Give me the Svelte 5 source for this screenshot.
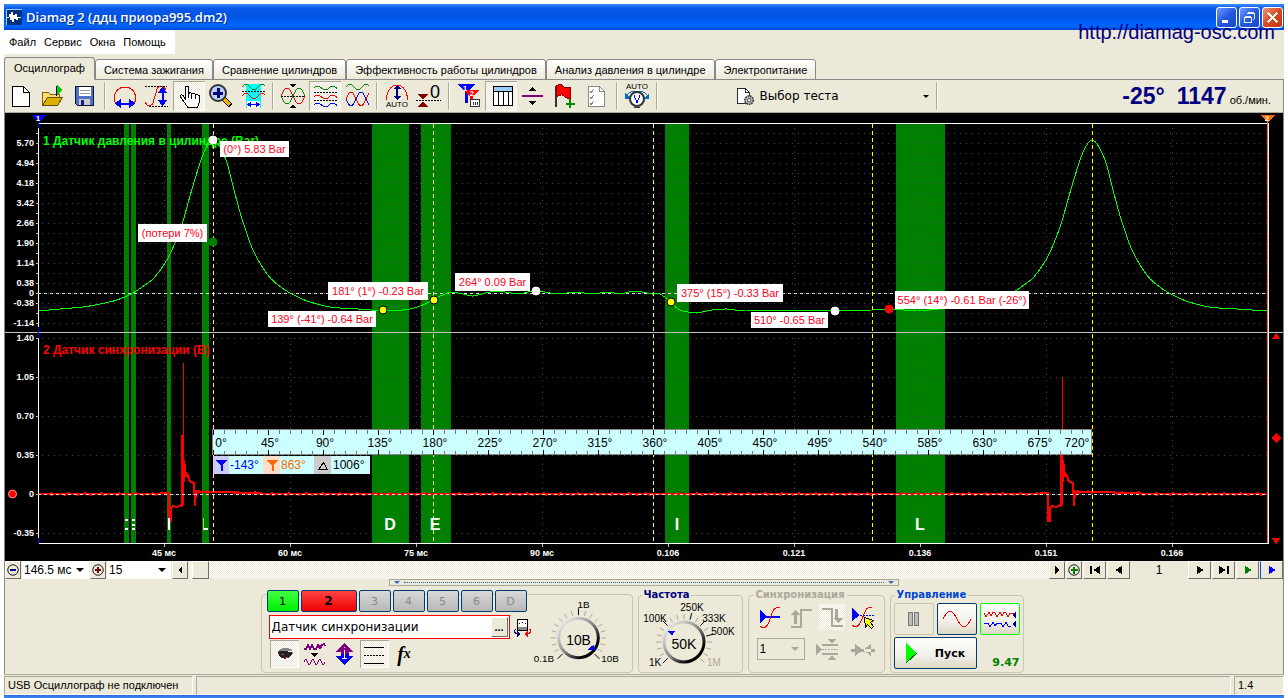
<script>
    const menu = ["Файл", "Сервис", "Окна", "Помощь"];

    const tabs = [
        "Осциллограф",
        "Система зажигания",
        "Сравнение цилиндров",
        "Эффективность работы цилиндров",
        "Анализ давления в цилиндре",
        "Электропитание",
    ];

    // each inner list is one block of the toolbar, blocks are split by a separator
    const tools = [
        ["new", "open", "save"],
        ["period", "rise", "hand", "zoom", "fit"],
        ["overlay", "stack", "mix"],
        ["auto", "zero"],
        ["markers", "table", "split", "flag", "report"],
        ["autoVolt"],
    ];
    const toolTitles = {
        new: "Новый",
        open: "Открыть",
        save: "Сохранить",
        period: "Период",
        rise: "Фронт",
        hand: "Рука",
        zoom: "Увеличить",
        fit: "По ширине",
        overlay: "Наложить",
        stack: "Разделить",
        mix: "Совместить",
        auto: "Авто",
        zero: "Ноль",
        markers: "Маркеры",
        table: "Таблица",
        split: "Разделитель",
        flag: "Добавить флаг",
        report: "Отчёт",
        autoVolt: "Авто диапазон",
    };

    let activeTab = $state(0);
    let pressed = $state(["hand", "stack", "table"]);
    let channel = $state(2);
    let sensor = $state("Датчик синхронизации");

    function toggleTool(name) {
        pressed = pressed.includes(name)
            ? pressed.filter((n) => n !== name)
            : [...pressed, name];
    }

    const channels = [1, 2, 3, 4, 5, 6, "D"];

    // plot geometry
    const left = 38;
    const right = 1267;
    const top = 124;
    const bottom = 543;
    const zero1 = 293;
    const zero2 = 494;
    const cycle = 879;

    const scale1 = [
        "5.70", "4.94", "4.18", "3.42", "2.66", "1.90", "1.14", "0.38", "-0.38", "-1.14",
    ].map((text, i) => ({ text, y: 143 + i * 20 }));
    const scale2 = ["1.40", "1.05", "0.70", "0.35", "0", "-0.35"].map(
        (text, i) => ({ text, y: 338 + i * 39 }),
    );
    const times = [
        "45 мс", "60 мс", "75 мс", "90 мс", "0.106", "0.121", "0.136", "0.151", "0.166",
    ].map((text, i) => ({ text, x: 164 + i * 126 }));
    const minorRows = Array.from({ length: 20 }, (_, i) => 133 + i * 10);

    const bands = [
        [124, 129], [131, 136], [167, 171], [202, 209],
        [372, 409], [421, 451], [665, 689], [896, 945],
    ];
    const letters = [["D", 390], ["E", 435], ["I", 677], ["L", 920]];
    const strokes = [213, 433, 653, 872, 1092];

    const notes = [
        { x: 220, y: 141, w: 69, h: 16, text: "(0°) 5.83 Bar" },
        { x: 138, y: 224, w: 69, h: 18, text: "(потери 7%)" },
        { x: 268, y: 311, w: 108, h: 16, text: "139° (-41°) -0.64 Bar" },
        { x: 328, y: 282, w: 100, h: 18, text: "181° (1°) -0.23 Bar" },
        { x: 455, y: 273, w: 75, h: 18, text: "264° 0.09 Bar" },
        { x: 677, y: 284, w: 106, h: 18, text: "375° (15°) -0.33 Bar" },
        { x: 751, y: 312, w: 77, h: 16, text: "510° -0.65 Bar" },
        { x: 895, y: 291, w: 134, h: 18, text: "554° (14°) -0.61 Bar (-26°)" },
    ];
    const dots = [
        [213, 140, "#fff"], [213, 242, "#008000"], [383, 310, "#ff0"],
        [434, 300, "#ff0"], [536, 291, "#fff"], [671, 302, "#ff0"],
        [835, 311, "#fff"], [889, 309, "#f00"],
    ];

    const rising = [
        [39, 311], [60, 309], [83, 307], [100, 304], [117, 300], [133, 293],
        [145, 285], [153, 279], [161, 269], [168, 258], [175, 243], [183, 221],
        [190, 196], [200, 163], [206, 148], [213, 140],
    ];
    const falling = [
        [220, 147], [227, 163], [233, 186], [242, 219], [253, 250], [267, 274],
        [278, 285], [290, 293], [307, 301], [330, 307], [358, 309], [388, 311],
    ];
    const middle = [
        [410, 309], [425, 304], [434, 299], [445, 294], [452, 292], [463, 294],
        [473, 296], [490, 292], [505, 292], [518, 294], [536, 291], [558, 294],
        [575, 292], [592, 294], [607, 292], [621, 294], [634, 291], [652, 294],
        [660, 294], [671, 302], [678, 309], [688, 312], [702, 312], [712, 310],
        [727, 309], [745, 311], [790, 310], [835, 311], [872, 310], [904, 310],
    ];
    const shift = (points) => points.map(([x, y]) => [x + cycle, y]);
    const pressure = smooth([
        ...rising,
        ...falling,
        ...middle,
        ...shift(rising),
        ...shift(falling),
    ]);

    const pulse = [
        [169, 493], [169, 521], [171, 521], [171, 508], [173, 506], [177, 507],
        [181, 505], [182, 507], [182, 436], [183, 436], [183, 505], [184, 460],
        [186, 476], [188, 475], [189, 480], [191, 482], [194, 483], [195, 506],
        [196, 490], [197, 493], [199, 491],
    ];
    const sync = syncTrace();

    function smooth(p) {
        let d = `M${p[0]}`;
        for (let i = 0; i < p.length - 1; i++) {
            const a = p[i - 1] ?? p[i];
            const b = p[i];
            const c = p[i + 1];
            const e = p[i + 2] ?? c;
            d += `C${b[0] + (c[0] - a[0]) / 6} ${b[1] + (c[1] - a[1]) / 6} ${c[0] - (e[0] - b[0]) / 6} ${c[1] - (e[1] - b[1]) / 6} ${c[0]} ${c[1]}`;
        }
        return d;
    }

    function syncTrace() {
        const points = [];
        let x = left + 1;
        while (x < right) {
            const phase = x - (x > 1000 ? cycle : 0);
            if (phase === 169) {
                const dx = x - 169;
                points.push(...pulse.map(([px, py]) => [px + dx, py]));
                x += 31;
                continue;
            }
            let y = zero2;
            if (phase > 160 && phase < 169) y = 493;
            if (phase > 199 && phase < 236) y = 492;
            else if (phase >= 236 && phase < 262) y = 493;
            points.push([x, y + ((x * 7919) % 13 === 0 ? 1 : 0) - ((x * 31) % 17 === 0 ? 1 : 0)]);
            x += 1;
        }
        return "M" + points.map((p) => p.join(" ")).join("L");
    }

    function wave(x, y, len, amp, period, dir = 1) {
        let d = "";
        for (let i = 0; i <= len; i++) {
            const v = y - dir * amp * Math.sin((i / period) * 2 * Math.PI);
            d += `${i ? "L" : "M"}${x + i} ${v.toFixed(1)}`;
        }
        return d;
    }

    const ruler = Array.from({ length: 80 }, (_, i) => 213 + i * 11);
    const degrees = Array.from({ length: 17 }, (_, i) => ({
        text: `${i * 45}°`,
        x: i === 0 ? 221 : i === 16 ? 1077 : 215 + i * 55,
    }));

    function knobTicks(cx, cy, majors) {
        return Array.from({ length: 19 }, (_, i) => {
            const a = ((-225 + i * 15) * Math.PI) / 180;
            const long = majors.includes(i);
            const r1 = 23;
            const r2 = long ? 30 : 28;
            return {
                long,
                x1: cx + r1 * Math.cos(a),
                y1: cy + r1 * Math.sin(a),
                x2: cx + r2 * Math.cos(a),
                y2: cy + r2 * Math.sin(a),
            };
        });
    }
</script>

{#snippet toolIcon(name)}
    <svg class="icon" viewBox="0 0 32 30" width="32" height="30" aria-hidden="true">
        {#if name === "new"}
            <path d="M7.500 5.500h11l6 6v14h-17z" fill="#fff" stroke="#000" />
            <path d="M18.500 5.500v6h6" fill="none" stroke="#000" />
        {:else if name === "open"}
            <path d="M5.500 24.500v-13h6l2 2h9v4" fill="#ffe066" stroke="#806000" />
            <path d="M5.500 24.500l5-8h15l-5 8z" fill="#e0b000" stroke="#605000" />
            <path d="M19.500 15V4.500" stroke="#000" />
            <path d="M20 4l6 5-6 5z" fill="#0c0" />
        {:else if name === "save"}
            <path d="M6.500 5.500h18v19h-16l-2-2z" fill="#5070c0" stroke="#101040" />
            <path d="M10 6h12v9H10z" fill="#fff" />
            <path d="M11 9h10M11 12h10" stroke="#999" />
            <path d="M10 18h11v6H10z" fill="#ccc" />
            <path d="M12 19h3v5h-3z" fill="#102080" />
        {:else if name === "period"}
            <path d="M8.500 24c-3-1-3-4-3-8 0-6 5-10 10.500-10s10.500 4 10.500 10c0 4 0 7-3 8" fill="none" stroke="#f00" />
            <path d="M9 22.500h14" stroke="#00f" stroke-width="2" />
            <path d="M6 22.500l6-5v10zM26 22.500l-6-5v10z" fill="#00f" />
        {:else if name === "rise"}
            <path d="M4.500 21c1 5 7 5 8-1l3-10c1-6 8-6 9-1" fill="none" stroke="#f00" />
            <path d="M4 5.500h22M8 25.500h19" stroke="#000" stroke-dasharray="2 1" />
            <path d="M21.500 10v11" stroke="#00f" stroke-width="2" />
            <path d="M21.500 6l-5 6h10zM21.500 25l-5-6h10z" fill="#00f" />
        {:else if name === "hand"}
            <path
                d="M12.500 19V6.500c0-2 3-2 3 0V13c1-2 3-1 3 0 1-1 4-1 4 1 1-1 4 0 4 2v5l-2 5h-10l-4-6-3-4c-1-2 2-3 3-1z"
                fill="#fff"
                stroke="#000"
            />
            <path d="M15.500 13v4M18.500 14v4M22.500 14v4" stroke="#000" />
        {:else if name === "zoom"}
            <path d="M18 17l8 8" stroke="#000" stroke-width="5" />
            <path d="M18 17l7 7" stroke="#f4b000" stroke-width="3" />
            <circle cx="13" cy="12" r="8" fill="#b8d0ff" stroke="#333" stroke-width="2" />
            <path d="M13 7v10M8 12h10" stroke="#000080" stroke-width="3" />
        {:else if name === "fit"}
            <path d="M9 3h15v24H9z" fill="#0ff" />
            <path d="M10 20h13v7H10z" fill="#fff" />
            <path d={wave(5, 6, 23, 3, 16)} fill="none" stroke="#080" />
            <path d={wave(5, 15, 23, 3, 16)} fill="none" stroke="#f00" />
            <path d="M5 10.500h23" stroke="#000" stroke-dasharray="2 1" />
            <path d="M11 23.500h11" stroke="#00f" />
            <path d="M10 23.500l4-3v6zM23 23.500l-4-3v6z" fill="#00f" />
        {:else if name === "overlay"}
            <path d={wave(4, 15, 24, 8, 24)} fill="none" stroke="#f00" />
            <path d={wave(4, 15, 24, 8, 24, -1)} fill="none" stroke="#080" />
            <path d="M4 15.500h24" stroke="#000" stroke-dasharray="2 1" />
            <path d="M13 3h6l-3 4zM13 27h6l-3-4z" fill="#000" />
        {:else if name === "stack"}
            <path d={wave(5, 7, 23, 2, 15)} fill="none" stroke="#080" />
            <path d={wave(5, 16, 23, 2, 15)} fill="none" stroke="#f00" />
            <path d={wave(5, 24, 23, 2, 15)} fill="none" stroke="#00f" />
            <path d="M5 11.500h23M5 19.500h23" stroke="#000" stroke-dasharray="2 1" />
        {:else if name === "mix"}
            <path d={wave(5, 6, 23, 3, 16)} fill="none" stroke="#080" />
            <path d={wave(5, 18, 23, 7, 20)} fill="none" stroke="#f00" />
            <path d={wave(5, 18, 23, 7, 20, -1)} fill="none" stroke="#00f" />
        {:else if name === "auto"}
            <path d="M5.500 19c0-9 5-15 10.500-15s10.500 6 10.500 15" fill="none" stroke="#f00" />
            <path d="M16 6v10" stroke="#000080" stroke-width="2" />
            <path d="M16 4l-4 4h8zM16 19l-4-4h8z" fill="#000080" />
            <text x="16" y="26" class="tiny">AUTO</text>
        {:else if name === "zero"}
            <path d="M4 13h11l-5 5zM4 26h11l-5-5z" fill="#800000" />
            <path d="M3 19.500h25" stroke="#000" stroke-dasharray="2 1" />
            <text x="22" y="17" class="nil">0</text>
        {:else if name === "markers"}
            <path d="M4 3h18l-7 8v11h-3V11z" fill="#00f" />
            <path d="M11 9h15l-6 7v7h-3v-7z" fill="#f00" />
            <path d="M17.500 18.500h9v7h-9z" fill="#fff" stroke="#333" />
            <path d="M20 21v3M22.500 21v3M24.500 21v3" stroke="#333" />
            <text x="12" y="10" class="mark">1</text>
            <text x="19" y="15" class="mark">2</text>
        {:else if name === "table"}
            <path d="M8.500 5.500h19v19h-19z" fill="#fff" stroke="#000" />
            <path d="M9 6h18v4H9z" fill="#9cf" />
            <path d="M8 10.500h20M13.500 10v15M18.500 10v15M23.500 10v15" stroke="#000" />
        {:else if name === "split"}
            <path d="M5 15h21" stroke="#800080" stroke-width="2" />
            <path d="M12 10h7l-3.500-4zM12 20h7l-3.500 4z" fill="#000" />
        {:else if name === "flag"}
            <path d="M6.500 5v21" stroke="#333" stroke-width="2" />
            <path d="M7 5c4-3 6-1 8 1s5 0 6 0l1 11c-2 1-5 0-7-2s-5-1-8 1z" fill="#f00" stroke="#800" />
            <path d="M21 18v9M17 22.500h9" stroke="#080" stroke-width="2" />
        {:else if name === "report"}
            <path d="M7.500 5.500h11l5 5v15h-16z" fill="#fff" stroke="#888" />
            <path d="M18.500 5.500v5h5" fill="none" stroke="#888" />
            <path d="M9 10l1 2 3-4M9 16l1 2 3-4M9 22l1 2 3-4" fill="none" stroke="#888" />
        {:else if name === "autoVolt"}
            <text x="16" y="8" class="tiny">AUTO</text>
            <path d="M5 16c3-8 19-8 22 0" fill="none" stroke="#0070d0" />
            <path d="M4 12v6h6zM28 12v6h-6z" fill="#0070d0" />
            <circle cx="16" cy="18" r="7" fill="#fff" stroke="#333" stroke-width="2" />
            <path d="M13 14l3 8 3-8" fill="none" stroke="#00f" />
            <path d="M13 26h6" stroke="#333" />
        {/if}
    </svg>
{/snippet}

<div class="window">
    <header class="titlebar">
        <svg class="icon" viewBox="0 0 16 16" width="16" height="16" aria-hidden="true">
            <path d="M0 0h16v16H0z" fill="#003080" />
            <path d="M0 0h16v16H0z" fill="none" stroke="#9cf" />
            <path d="M1 8h2l1-3 1 6 1-8 1 10 1-7 1 4 1-5 1 6 1-3h3" fill="none" stroke="#fff" />
        </svg>
        <h1>Diamag 2 (ддц приора995.dm2)</h1>
        <button class="win" aria-label="Свернуть">
            <svg viewBox="0 0 21 21" width="19" height="19"><path d="M5 15h7" stroke="#fff" stroke-width="3" /></svg>
        </button>
        <button class="win" aria-label="Восстановить">
            <svg viewBox="0 0 21 21" width="19" height="19">
                <path d="M5.500 9.500h7v7h-7zM5 10h8M8.500 7V5.500h7v7H14M8 6h8" fill="none" stroke="#fff" />
            </svg>
        </button>
        <button class="win close" aria-label="Закрыть">
            <svg viewBox="0 0 21 21" width="19" height="19"><path d="M5 5l11 11M16 5L5 16" stroke="#fff" stroke-width="2" /></svg>
        </button>
        <a class="site" href="http://diamag-osc.com">http://diamag-osc.com</a>
    </header>

    <nav class="menu">
        {#each menu as item}
            <button>{item}</button>
        {/each}
    </nav>

    <div class="tabs" role="tablist">
        {#each tabs as tab, i}
            <button role="tab" aria-selected={activeTab === i} class:active={activeTab === i} onclick={() => (activeTab = i)}>
                {tab}
            </button>
        {/each}
    </div>

    <main>
        <div class="toolbar">
            {#each tools as block}
                {#each block as name}
                    <button
                        class="tool"
                        class:pressed={pressed.includes(name)}
                        aria-label={toolTitles[name]}
                        onclick={() => toggleTool(name)}
                    >
                        {@render toolIcon(name)}
                    </button>
                {/each}
                <span class="sep"></span>
            {/each}
            <label class="test">
                <svg class="icon" viewBox="0 0 26 26" width="26" height="26" aria-hidden="true">
                    <path d="M2.500 3.500h10l5 5v14h-15z" fill="#fff" stroke="#000" />
                    <path d="M12.500 3.500v5h5" fill="none" stroke="#000" />
                    <circle cx="17" cy="18" r="5" fill="#bbb" stroke="#333" stroke-width="2" stroke-dasharray="2 1" />
                    <circle cx="17" cy="18" r="2" fill="#fff" stroke="#333" />
                </svg>
                <select aria-label="Выбор теста">
                    <option>Выбор теста</option>
                </select>
                <span class="caret"></span>
            </label>
            <span class="sep"></span>
            <output class="rpm"><b>-25°</b><b>1147</b><span>об./мин.</span></output>
        </div>

        <svg class="scope" viewBox="5 113 1278 448" role="img" aria-label="Осциллограмма">
            <rect x="5" y="113" width="1278" height="448" fill="#000" />
            {#each bands as [x1, x2]}
                <rect x={x1} y={top} width={x2 - x1} height={bottom - top} fill="#008000" />
            {/each}

            <g class="grid">
                {#each minorRows as y}
                    <path d="M{left + 4} {y + 0.5}H{right}" />
                {/each}
                {#each scale2 as { y }}
                    <path d="M{left + 4} {y + 0.5}H{right}" />
                {/each}
                {#each times as { x }}
                    <path d="M{x + 0.5} {top + 4}V{bottom}" />
                {/each}
            </g>

            <text class="title" x="43" y="145" fill="#0f0">1 Датчик давления в цилиндре (Bar)</text>
            <text class="title" x="43" y="354" fill="#f00">2 Датчик синхронизации (В)</text>

            <path d="M{left} {zero1 + 0.5}H{right}" class="zero" />
            <path d={pressure} fill="none" stroke="#0f0" />

            <path d={sync} fill="none" stroke="#f00" stroke-width="2" />
            <path d="M183.500 363v80M1062.500 377v70" stroke="#f00" />
            <path d="M{left} {zero2 + 0.5}H{right}" class="zero" />

            {#each strokes as x}
                <path d="M{x + 0.5} {top}V{bottom}" stroke="#ff0" stroke-dasharray="4 3" />
            {/each}

            {#each letters as [text, x]}
                <text class="letter" {x} y="530">{text}</text>
            {/each}
            <path
                d="M125 519.500h3M125 528.500h3M132 519.500h3M132 524.500h3M132 528.500h3M168.500 518v12M203 529h5"
                stroke="#fff"
                stroke-width="2"
            />
            <path d="M203.500 518v11" stroke="#cc0" />

            <!-- frame and axes -->
            <path d="M{left} 123.500H1268M{left + 0.5} 123V543M{left} 543.500H1269M1268.500 123V544" stroke="#fff" />
            <path d="M1267.500 118V543" stroke="#ff6600" />
            <path d="M5 332.500H1283" stroke="#c0c0c0" />
            <path d="M38.500 117v11M38.500 327v11M38.500 538v6" stroke="#00f" />
            {#each minorRows as y}
                <path d="M36 {y + 0.5}h3" stroke="#c0c0c0" />
            {/each}
            {#each scale1 as { text, y }}
                <text class="axis" x="34" y={y + 3}>{text}</text>
            {/each}
            <text class="axis" x="34" y="296">0</text>
            {#each scale2 as { text, y }}
                <path d="M36 {y + 0.5}h3" stroke="#c0c0c0" />
                <text class="axis" x="34" y={y + 3}>{text}</text>
            {/each}
            {#each times as { text, x }}
                <path d="M{x + 0.5} 544v3" stroke="#c0c0c0" />
                <text class="axis mid" {x} y="556">{text}</text>
            {/each}

            <path d="M31 115h15l-7 7h-1z" fill="#00f" />
            <path d="M1260 115h15l-7 7h-1z" fill="#ff6600" />
            <text class="mark" x="38" y="121">1</text>
            <text class="mark" x="1267" y="121">2</text>
            <path d="M1276.500 333l4 6h-9zM1276.500 433l5 5-5 5-5-5zM1276.500 544l4-6h-9z" fill="#f00" />
            <circle cx="12.500" cy="494" r="4" fill="#f00" stroke="#f99" />

            <!-- crank angle ruler -->
            <rect x="212.500" y="429.500" width="879" height="25" fill="#cff" stroke="#888" />
            {#each ruler as x, i}
                <path
                    d="M{x + 0.5} 430v{i % 5 ? 4 : 5}M{x + 0.5} {i % 5 ? 451 : 450}v{i % 5 ? 3 : 5}"
                    stroke={i % 5 ? "#777" : "#000"}
                />
            {/each}
            {#each degrees as { text, x }}
                <text class="deg" {x} y="447">{text}</text>
            {/each}

            <rect x="213" y="456" width="157" height="18" fill="#cff" />
            <rect x="213" y="456" width="16" height="18" fill="#ccf" />
            <rect x="263" y="456" width="17" height="18" fill="#fdc" />
            <rect x="314" y="456" width="17" height="18" fill="#ccc" />
            <path d="M216 460h11l-5 5v5h-1v-5z" fill="#00f" stroke="#00f" />
            <path d="M267 460h11l-5 5v5h-1v-5z" fill="#f60" stroke="#f60" />
            <path d="M318.500 469.500h9l-4-7z" fill="none" stroke="#000" />
            <text class="deg start" x="230" y="469" fill="#00f">-143°</text>
            <text class="deg start" x="281" y="469" fill="#ff6600">863°</text>
            <text class="deg start" x="333" y="469">1006°</text>

            {#each dots as [cx, cy, fill]}
                <circle {cx} {cy} r="4" {fill} stroke={fill === "#ff0" ? "#000" : fill} />
            {/each}
            {#each notes as n}
                <rect x={n.x} y={n.y} width={n.w} height={n.h} fill="#fff" />
                <text class="note" x={n.x + n.w / 2} y={n.y + n.h / 2 + 4}>{n.text}</text>
            {/each}
        </svg>

        <div class="timeline">
            <button class="nav round" aria-label="Сжать">
                <svg viewBox="0 0 16 16" width="14" height="14"><circle cx="8" cy="8" r="6" fill="none" stroke="#000" /><path d="M5 8h6" stroke="#000080" stroke-width="2" /></svg>
            </button>
            <span class="combo span-time">
                <select aria-label="Развёртка"><option>146.5 мс</option></select><span class="caret"></span>
            </span>
            <button class="nav round" aria-label="Растянуть">
                <svg viewBox="0 0 16 16" width="14" height="14"><circle cx="8" cy="8" r="6" fill="none" stroke="#000" /><path d="M5 8h6M8 5v6" stroke="#800000" stroke-width="2" /></svg>
            </button>
            <span class="combo span-count">
                <select aria-label="Кадры"><option>15</option></select><span class="caret"></span>
            </span>
            <button class="nav round" aria-label="Назад">
                <svg viewBox="0 0 8 8" width="8" height="8"><path d="M6 0v8L2 4z" /></svg>
            </button>
            <div class="track"><div class="thumb"></div></div>
            <button class="nav round" aria-label="Вперёд">
                <svg viewBox="0 0 8 8" width="8" height="8"><path d="M2 0v8l4-4z" /></svg>
            </button>
            <button class="nav round" aria-label="Добавить кадр">
                <svg viewBox="0 0 16 16" width="14" height="14"><circle cx="8" cy="8" r="6" fill="none" stroke="#000" /><path d="M4 8h8M8 4v8" stroke="#008000" stroke-width="2" /></svg>
            </button>
            <button class="nav" aria-label="В начало">
                <svg viewBox="0 0 12 8" width="12" height="8"><path d="M1 0h2v8H1zM11 0v8L4 4z" /></svg>
            </button>
            <button class="nav" aria-label="Предыдущий">
                <svg viewBox="0 0 12 8" width="12" height="8"><path d="M9 0v8L2 4z" /></svg>
            </button>
            <span class="frame-no">1</span>
            <button class="nav" aria-label="Следующий">
                <svg viewBox="0 0 12 8" width="12" height="8"><path d="M3 0v8l7-4z" /></svg>
            </button>
            <button class="nav" aria-label="В конец">
                <svg viewBox="0 0 12 8" width="12" height="8"><path d="M1 0v8l7-4zM9 0h2v8H9z" /></svg>
            </button>
            <button class="nav" aria-label="Воспроизвести">
                <svg viewBox="0 0 12 8" width="12" height="8"><path d="M3 0v8l7-4z" fill="#008000" /></svg>
            </button>
            <button class="nav play" aria-label="Непрерывно">
                <svg viewBox="0 0 12 8" width="12" height="8"><path d="M3 0v8l7-4z" fill="#00f" /></svg>
            </button>
        </div>

        <div class="splitter"><span class="caret"></span><i></i><span class="caret"></span></div>

        <div class="controls">
            <section class="group channel">
                <div class="inputs">
                    <div class="channels">
                        {#each channels as c}
                            <button
                                class:green={c === 1}
                                class:red={c === 2}
                                class:wide={c === channel}
                                class:off={c !== 1 && c !== 2}
                                onclick={() => (channel = c)}>{c}</button
                            >
                        {/each}
                    </div>
                    <div class="sensor-row">
                        <div class="sensor">
                            <input type="text" aria-label="Датчик" bind:value={sensor} />
                            <button>...</button>
                        </div>
                        <svg class="icon" viewBox="0 0 20 20" width="20" height="20" aria-hidden="true">
                            <path d="M4.500 2.500h10v11h-10z" fill="#fff" stroke="#000" />
                            <path d="M5 10h9v3H5z" fill="#888" />
                            <path d="M6 6h1M9 5h1M12 6h1" stroke="#000" />
                            <path d="M3 12c-3 2-2 5 3 5" fill="none" stroke="#000080" />
                            <path d="M16 12c4 1 2 5-3 5" fill="none" stroke="#f00" />
                            <path d="M4 14l4 3-4 3z" fill="#000080" />
                            <path d="M15 14l-4 3 4 3z" fill="#f00" />
                        </svg>
                    </div>
                    <div class="modes">
                        <button class="mode pressed" aria-label="Показать канал">
                            <svg class="icon" viewBox="0 0 28 26" width="28" height="26">
                                <path d="M8 10c3-4 10-4 14-1l1 4c-4 6-11 6-14 1z" fill="#888" />
                                <path d="M8 11c4-2 9-2 14 0v3c-4 5-10 5-13 0z" fill="#222" />
                                <path d="M18 11l5-1M10 17c3 3 8 2 10-1" stroke="#fff" fill="none" />
                                <path d="M11 13h3M15 16h3" stroke="#c33" />
                            </svg>
                        </button>
                        <button class="mode" aria-label="Фильтр">
                            <svg class="icon" viewBox="0 0 28 26" width="28" height="26">
                                <path d="M4 8h2l2-4 2 4 2-4 2 4h2l2-4 2 3 2-3 2-1 1 2" fill="none" stroke="#800080" stroke-width="2" />
                                <path d="M11 12h7l-3.500 4z" />
                                <path d={wave(4, 21, 21, 3, 7)} fill="none" stroke="#800080" />
                            </svg>
                        </button>
                        <button class="mode" aria-label="Инвертировать">
                            <svg class="icon" viewBox="0 0 28 26" width="28" height="26">
                                <path d="M14.500 2l9 9h-5v2h-8v-2h-5z" fill="#800080" />
                                <path d="M14.500 24l9-9h-5v-2h-8v2h-5z" fill="#00f" />
                                <path d="M14.500 9v8M12 17.500h5M14 6.500h1" stroke="#fff" />
                            </svg>
                        </button>
                        <button class="mode pressed" aria-label="Линии">
                            <svg class="icon" viewBox="0 0 28 26" width="28" height="26">
                                <path d="M4 6.500h20M4 22.500h20" stroke="#000" />
                                <path d="M4 14.500h20" stroke="#000" stroke-dasharray="2 1" />
                            </svg>
                        </button>
                        <button class="mode fx" aria-label="Функция">f<sub>x</sub></button>
                    </div>
                </div>
                <svg class="knob" viewBox="535 597 96 74" width="96" height="74" role="img" aria-label="Вольт на деление">
                    <defs>
                        <linearGradient id="ring" x1="0" y1="0" x2="1" y2="1">
                            <stop offset="0" stop-color="#fff" />
                            <stop offset="0.500" stop-color="#888" />
                            <stop offset="0.800" stop-color="#000" />
                        </linearGradient>
                    </defs>
                    {#each knobTicks(581, 640, [0, 9, 18]) as t}
                        <line x1={t.x1} y1={t.y1} x2={t.x2} y2={t.y2} stroke={t.long ? "#000" : "#aca899"} />
                    {/each}
                    <circle cx="581" cy="640" r="20" fill="none" stroke="url(#ring)" stroke-width="3" />
                    <path d="M590 652h8l-2-5z" fill="#00f" />
                    <text x="581" y="647" class="value">10В</text>
                    <text x="586" y="610">1В</text>
                    <text x="546" y="664">0.1В</text>
                    <text x="613" y="664">10В</text>
                </svg>
            </section>

            <fieldset class="group freq">
                <legend>Частота</legend>
                <svg class="knob" viewBox="641 600 98 72" width="98" height="72" role="img" aria-label="Частота дискретизации">
                    {#each knobTicks(684, 643, [0, 6, 10, 12, 14]) as t}
                        <line x1={t.x1} y1={t.y1} x2={t.x2} y2={t.y2} stroke={t.long ? "#000" : "#aca899"} />
                    {/each}
                    <circle cx="684" cy="643" r="20" fill="none" stroke="url(#ring)" stroke-width="3" />
                    <path d="M668 632h7l-3 5z" fill="#00f" />
                    <text x="684" y="650" class="value">50K</text>
                    <text x="692" y="612">250K</text>
                    <text x="655" y="623">100K</text>
                    <text x="714" y="623">333K</text>
                    <text x="723" y="636">500K</text>
                    <text x="655" y="667">1K</text>
                    <text x="714" y="667" fill="#aca899">1M</text>
                </svg>
            </fieldset>

            <fieldset class="group syncing">
                <legend>Синхронизация</legend>
                <div class="row">
                    <button class="trig" aria-label="Уровень">
                        <svg class="icon" viewBox="0 0 26 24" width="26" height="24">
                            <path d="M3 5v13l7-6z" fill="#00f" /><path d="M8 12h15" stroke="#00f" stroke-width="2" />
                            <path d="M3 21c3 3 7 2 9-4l3-9c2-5 4-6 8-5" fill="none" stroke="#f00" />
                        </svg>
                    </button>
                    <button class="trig" aria-label="Фронт">
                        <svg class="icon" viewBox="0 0 26 24" width="26" height="24">
                            <path d="M3 22h10V5h11" fill="none" stroke="#aca899" stroke-width="2" />
                            <path d="M6 19v-9H2l5-5 5 5H9v9z" fill="#aca899" />
                        </svg>
                    </button>
                    <button class="trig pressed-flat" aria-label="Спад">
                        <svg class="icon" viewBox="0 0 26 24" width="26" height="24">
                            <path d="M3 4h10v17h11" fill="none" stroke="#aca899" stroke-width="2" />
                            <path d="M16 4v9h-2l5 5 5-5h-5V4z" fill="#aca899" />
                        </svg>
                    </button>
                    <button class="trig" aria-label="Выбор уровня">
                        <svg class="icon" viewBox="0 0 26 24" width="26" height="24">
                            <path d="M2 3v13l8-6z" fill="#00f" />
                            <path d="M10 10.500h14" stroke="#00f" stroke-dasharray="2 1" />
                            <path d="M2 20c3 3 7 2 9-4l4-9c2-5 4-5 7-4" fill="none" stroke="#f00" />
                            <path d="M14.500 12.500l9 3-3 2 3 4-2 2-4-4-2 3z" fill="#ff0" stroke="#000" />
                        </svg>
                    </button>
                </div>
                <div class="row">
                    <span class="combo number">
                        <select aria-label="Канал синхронизации"><option>1</option></select><span class="caret"></span>
                    </span>
                    <button class="trig" aria-label="Окно">
                        <svg class="icon" viewBox="0 0 26 24" width="26" height="24">
                            <path d="M2 7v11l6-5zM13 2h10l-5 4zM13 23h10l-5-4z" fill="#aca899" />
                            <path d="M8 8h16M8 17h16" stroke="#aca899" stroke-width="2" />
                            <path d="M8 12.500h16" stroke="#aca899" stroke-dasharray="2 1" />
                        </svg>
                    </button>
                    <button class="trig" aria-label="Центр">
                        <svg class="icon" viewBox="0 0 26 24" width="26" height="24">
                            <path d="M5 7l8 6-8 6zM21 7l-8 6 8 6zM1 12h24v3H1z" fill="#aca899" />
                        </svg>
                    </button>
                </div>
            </fieldset>

            <fieldset class="group run">
                <legend>Управление</legend>
                <div class="row">
                    <button class="big off" aria-label="Пауза" disabled>
                        <svg class="icon" viewBox="0 0 36 28" width="36" height="28">
                            <path d="M12.500 7.500h4v13h-4zM18.500 7.500h4v13h-4z" fill="#bbb" stroke="#777" />
                        </svg>
                    </button>
                    <button class="big" aria-label="Синусоида">
                        <svg class="icon" viewBox="0 0 36 28" width="36" height="28">
                            <path d={wave(4, 14, 28, 8, 28)} fill="none" stroke="#f00" />
                        </svg>
                    </button>
                    <button class="big on" aria-label="Самописец">
                        <svg class="icon" viewBox="0 0 36 28" width="36" height="28">
                            <path d="M2 8l2 4 3-5 2 4 2-4 2 1 2 4 3-5 2 4 2-4 2 1 2 4 2-4h4" fill="none" stroke="#f00" />
                            <path d="M2 18h4l2 4 3-5 2 4 2-3h4l2 4 3-5 2 4h3" fill="none" stroke="#00f" />
                            <path d="M34 6v7l-4-3zM34 15v7l-4-3z" fill="#000080" />
                        </svg>
                    </button>
                </div>
                <div class="row">
                    <button class="big start-btn">
                        <svg class="icon" viewBox="0 0 12 20" width="12" height="20"><path d="M1 0v20l11-10z" fill="#0f0" /><path d="M1 20l11-10" stroke="#060" /></svg>
                        Пуск
                    </button>
                    <output class="load">9.47</output>
                </div>
            </fieldset>
        </div>
    </main>

    <footer class="status">
        <span>USB Осциллограф не подключен</span>
        <span class="fill"></span>
        <span class="version">1.4</span>
    </footer>
    <div class="taskbar"></div>
</div>

<style>
    :global(body) {
        margin: 0;
        background: #fff;
    }

    .window {
        margin: 4px 4px 0;
        background: #ece9d8;
        font-family: "Liberation Sans", Arial, sans-serif;
        font-size: 11px;
        color: #000;
    }

    button,
    select,
    input {
        font: inherit;
        color: inherit;
        margin: 0;
        padding: 0;
        border: 0;
        background: none;
        border-radius: 0;
    }

    select {
        appearance: none;
        width: 100%;
    }

    svg {
        display: block;
        shape-rendering: crispEdges;
    }

    circle,
    line {
        shape-rendering: auto;
    }

    .caret {
        flex: none;
        width: 0;
        height: 0;
        border: 4px solid transparent;
        border-top-color: #000;
        border-bottom: 0;
        pointer-events: none;
    }

    .titlebar {
        position: relative;
        display: flex;
        align-items: center;
        gap: 2px;
        height: 26px;
        padding: 0 1px 0 2px;
        background: linear-gradient(#3a92ff 0, #0a5ae8 4px, #0054e3 12px, #0066ff 22px, #0048d0);
    }

    h1 {
        flex: 1;
        margin: 0 0 0 2px;
        font-family: "Open Sans", "Noto Sans", sans-serif;
        font-size: 13px;
        font-weight: 600;
        color: #fff;
        text-shadow: 1px 1px 0 #003090;
    }

    .win {
        width: 21px;
        height: 21px;
        border: 1px solid #fff;
        border-radius: 3px;
        background: linear-gradient(135deg, #6f9cff, #2458e0 50%, #1a48c8);
    }

    .close {
        background: linear-gradient(135deg, #f0987c, #d84820 50%, #c03a10);
    }

    .site {
        position: absolute;
        right: 9px;
        top: 17px;
        font-size: 20px;
        line-height: 23px;
        color: #000080;
        text-decoration: none;
        z-index: 1;
    }

    .menu {
        display: inline-flex;
        gap: 8px;
        height: 24px;
        padding: 0 9px 0 5px;
        background: #fff;
        vertical-align: top;
    }

    .tabs {
        display: flex;
        align-items: flex-end;
        height: 26px;
        margin-bottom: -1px;
    }

    .tabs button {
        height: 21px;
        padding: 0 8px;
        border: 1px solid #888;
        border-radius: 3px 3px 0 0;
        background: linear-gradient(#fff, #ece9d8);
        white-space: nowrap;
    }

    .tabs .active {
        height: 23px;
        padding: 0 9px 2px;
        border-bottom-color: #ece9d8;
        background: #ece9d8;
    }

    main {
        border: 1px solid #888;
        border-width: 1px 1px 0;
    }

    .toolbar {
        display: flex;
        align-items: center;
        height: 32px;
        border-bottom: 1px solid #aca899;
    }

    .tool {
        width: 32px;
        height: 30px;
    }

    .pressed,
    .pressed-flat {
        background: conic-gradient(#fff 25%, #ece9d8 0 50%, #fff 0 75%, #ece9d8 0) 0 0 / 2px 2px;
    }

    .pressed {
        box-shadow: inset 1px 1px #aca899, inset -1px -1px #fff;
    }

    .sep {
        width: 2px;
        height: 28px;
        margin: 0 3px;
        box-sizing: border-box;
        border-left: 1px solid #aca899;
        border-right: 1px solid #fff;
    }

    .tiny {
        font-size: 8px;
        text-anchor: middle;
    }

    .nil {
        font-size: 18px;
        text-anchor: middle;
    }

    .mark {
        font-size: 8px;
        font-weight: 700;
        text-anchor: middle;
        fill: #fff;
    }

    .test {
        display: flex;
        align-items: center;
        gap: 3px;
        width: 194px;
        margin-left: 74px;
        padding-right: 4px;
        font-family: "DejaVu Sans", sans-serif;
        font-size: 12px;
    }

    .test .caret,
    .splitter .caret {
        border-width: 3px;
        border-bottom: 0;
    }

    .rpm {
        display: flex;
        align-items: baseline;
        margin-left: auto;
        padding-right: 12px;
    }

    .rpm b {
        margin-right: 12px;
        font-size: 23px;
        line-height: 26px;
        color: #000080;
    }

    .rpm b + b {
        margin-right: 3px;
    }

    .scope {
        width: 100%;
        height: auto;
    }

    .grid path {
        stroke: #484848;
        stroke-dasharray: 1 5;
    }

    .zero {
        stroke: #e0e0e0;
        stroke-dasharray: 3 3;
    }

    .title {
        font-size: 12px;
        font-weight: 700;
    }

    .axis {
        font-size: 9px;
        font-weight: 700;
        text-anchor: end;
        fill: #fff;
    }

    .axis.mid {
        text-anchor: middle;
    }

    .letter {
        font-size: 16px;
        font-weight: 700;
        text-anchor: middle;
        fill: #fff;
    }

    .deg {
        font-size: 12px;
        text-anchor: middle;
    }

    .deg.start {
        text-anchor: start;
    }

    .note {
        font-size: 11px;
        text-anchor: middle;
        fill: #ff0020;
    }

    .timeline {
        display: flex;
        align-items: stretch;
        gap: 1px;
        height: 18px;
    }

    .nav {
        display: flex;
        align-items: center;
        justify-content: center;
        width: 23px;
        box-sizing: border-box;
        border: 1px solid;
        border-color: #fff #716f64 #716f64 #fff;
        background: #ece9d8;
    }

    .round {
        width: 16px;
    }

    .play {
        border-left-color: #0054e3;
    }

    .combo {
        display: flex;
        align-items: center;
        box-sizing: border-box;
        padding: 0 5px 0 2px;
        background: #fff;
        font-size: 12px;
    }

    .span-time {
        width: 67px;
    }

    .span-count {
        width: 64px;
    }

    .track {
        flex: 1;
        padding-left: 3px;
        background: conic-gradient(#fff 25%, #ece9d8 0 50%, #fff 0 75%, #ece9d8 0) 0 0 / 2px 2px;
    }

    .thumb {
        width: 17px;
        height: 18px;
        box-sizing: border-box;
        border: 1px solid;
        border-color: #fff #716f64 #716f64 #fff;
        background: #ece9d8;
    }

    .frame-no {
        width: 56px;
        text-align: center;
        font-size: 12px;
        line-height: 18px;
    }

    .splitter {
        display: flex;
        align-items: center;
        gap: 4px;
        width: 500px;
        height: 5px;
        margin: 0 auto;
        padding: 0 4px;
        border: 1px solid #aca899;
    }

    .splitter .caret {
        border-top-color: #316ac5;
    }

    .splitter i {
        flex: 1;
        height: 0;
        border-top: 1px dotted #316ac5;
    }

    .controls {
        display: flex;
        justify-content: center;
        align-items: stretch;
        gap: 5px;
        height: 88px;
        padding: 3px 4px 1px 0;
        box-sizing: border-box;
    }

    .group {
        min-width: 0;
        margin: 0;
        padding: 0 4px;
        box-sizing: border-box;
        border: 1px solid #c8c5b2;
        border-radius: 4px;
    }

    legend {
        margin-left: 1px;
        padding: 0 2px;
        font-family: "DejaVu Sans", sans-serif;
        font-size: 10px;
        line-height: 12px;
        font-weight: 700;
        color: #000080;
    }

    .channel {
        display: flex;
        width: 372px;
        margin-top: 5px;
        padding-left: 5px;
    }

    .inputs {
        width: 269px;
        margin-top: -5px;
    }

    .channels {
        display: flex;
        gap: 2px;
        margin-bottom: 3px;
    }

    .channels button {
        width: 32px;
        height: 22px;
        border: 1px solid #003c74;
        border-radius: 2px;
        box-sizing: border-box;
        font-family: "DejaVu Sans", sans-serif;
        background: #c8c8c8;
    }

    .channels .green {
        background: linear-gradient(#4f4, #0e0);
    }

    .channels .red {
        background: linear-gradient(#f44, #e00);
    }

    .channels .wide {
        width: 56px;
        font-size: 12px;
        font-weight: 700;
    }

    .channels .off {
        color: #888;
        background: linear-gradient(#d8d8d8, #b8b8b8);
    }

    .sensor-row {
        display: flex;
        align-items: center;
        gap: 3px;
        padding-left: 2px;
    }

    .sensor {
        display: flex;
        width: 241px;
        height: 24px;
        box-sizing: border-box;
        border: 1px solid #f00;
        padding: 1px;
        background: #fff;
    }

    .sensor input {
        flex: 1;
        min-width: 0;
        padding-left: 1px;
        font-family: "DejaVu Sans", sans-serif;
        font-size: 12px;
    }

    .sensor button {
        width: 17px;
        border: 1px solid;
        border-color: #fff #716f64 #716f64 #fff;
        background: #ece9d8;
        font-weight: 700;
        line-height: 10px;
    }

    .modes {
        display: flex;
        gap: 1px;
        padding: 1px 0 0 3px;
    }

    .mode {
        display: flex;
        align-items: center;
        justify-content: center;
        width: 29px;
        height: 28px;
    }

    .fx {
        font-family: "Liberation Serif", serif;
        font-size: 20px;
        font-weight: 700;
        font-style: italic;
    }

    .fx sub {
        font-size: 14px;
    }

    .knob text {
        font-size: 10px;
        text-anchor: middle;
    }

    .knob .value {
        font-size: 14px;
    }

    .freq {
        width: 105px;
        padding: 0 2px;
    }

    .freq .knob {
        margin-top: -2px;
    }

    .syncing {
        width: 137px;
    }

    .syncing legend {
        color: #aca899;
    }

    .row {
        display: flex;
        align-items: center;
        gap: 3px;
    }

    .syncing .row {
        justify-content: space-between;
        height: 32px;
        padding: 0 4px;
    }

    .trig {
        width: 26px;
        height: 26px;
    }

    .number {
        width: 48px;
        height: 22px;
        border: 1px solid #aca899;
        background: #ece9d8;
    }

    .number .caret {
        border-top-color: #aca899;
    }

    .run {
        width: 134px;
        padding: 0 3px;
    }

    .run legend {
        color: #0046d5;
    }

    .run .row {
        margin-top: 2px;
    }

    .big {
        display: flex;
        align-items: center;
        justify-content: center;
        width: 40px;
        height: 32px;
        box-sizing: border-box;
        border: 1px solid #003c74;
        border-radius: 2px;
        background: linear-gradient(#fff, #f0efe8 60%, #dcd8c4);
    }

    .big.off {
        border-color: #c8c5b2;
        background: #ece9d8;
    }

    .big.on {
        border-color: #0f0;
    }

    .start-btn {
        gap: 18px;
        width: 83px;
        font-family: "DejaVu Sans", sans-serif;
        font-size: 11px;
        font-weight: 700;
    }

    .load {
        flex: 1;
        align-self: flex-end;
        text-align: right;
        font-family: "DejaVu Sans", sans-serif;
        font-weight: 700;
        color: #008000;
    }

    .status {
        display: flex;
        gap: 3px;
        height: 19px;
        padding-top: 1px;
        border-top: 1px solid #aca899;
    }

    .status span {
        width: 189px;
        box-sizing: border-box;
        padding: 0 3px;
        border: 1px solid;
        border-color: #aca899 #fff #fff #aca899;
        line-height: 16px;
    }

    .status .fill {
        flex: 1;
    }

    .status .version {
        width: 50px;
    }

    .taskbar {
        height: 3px;
        background: linear-gradient(#2a6ae0, #3f8cf3);
    }
</style>
